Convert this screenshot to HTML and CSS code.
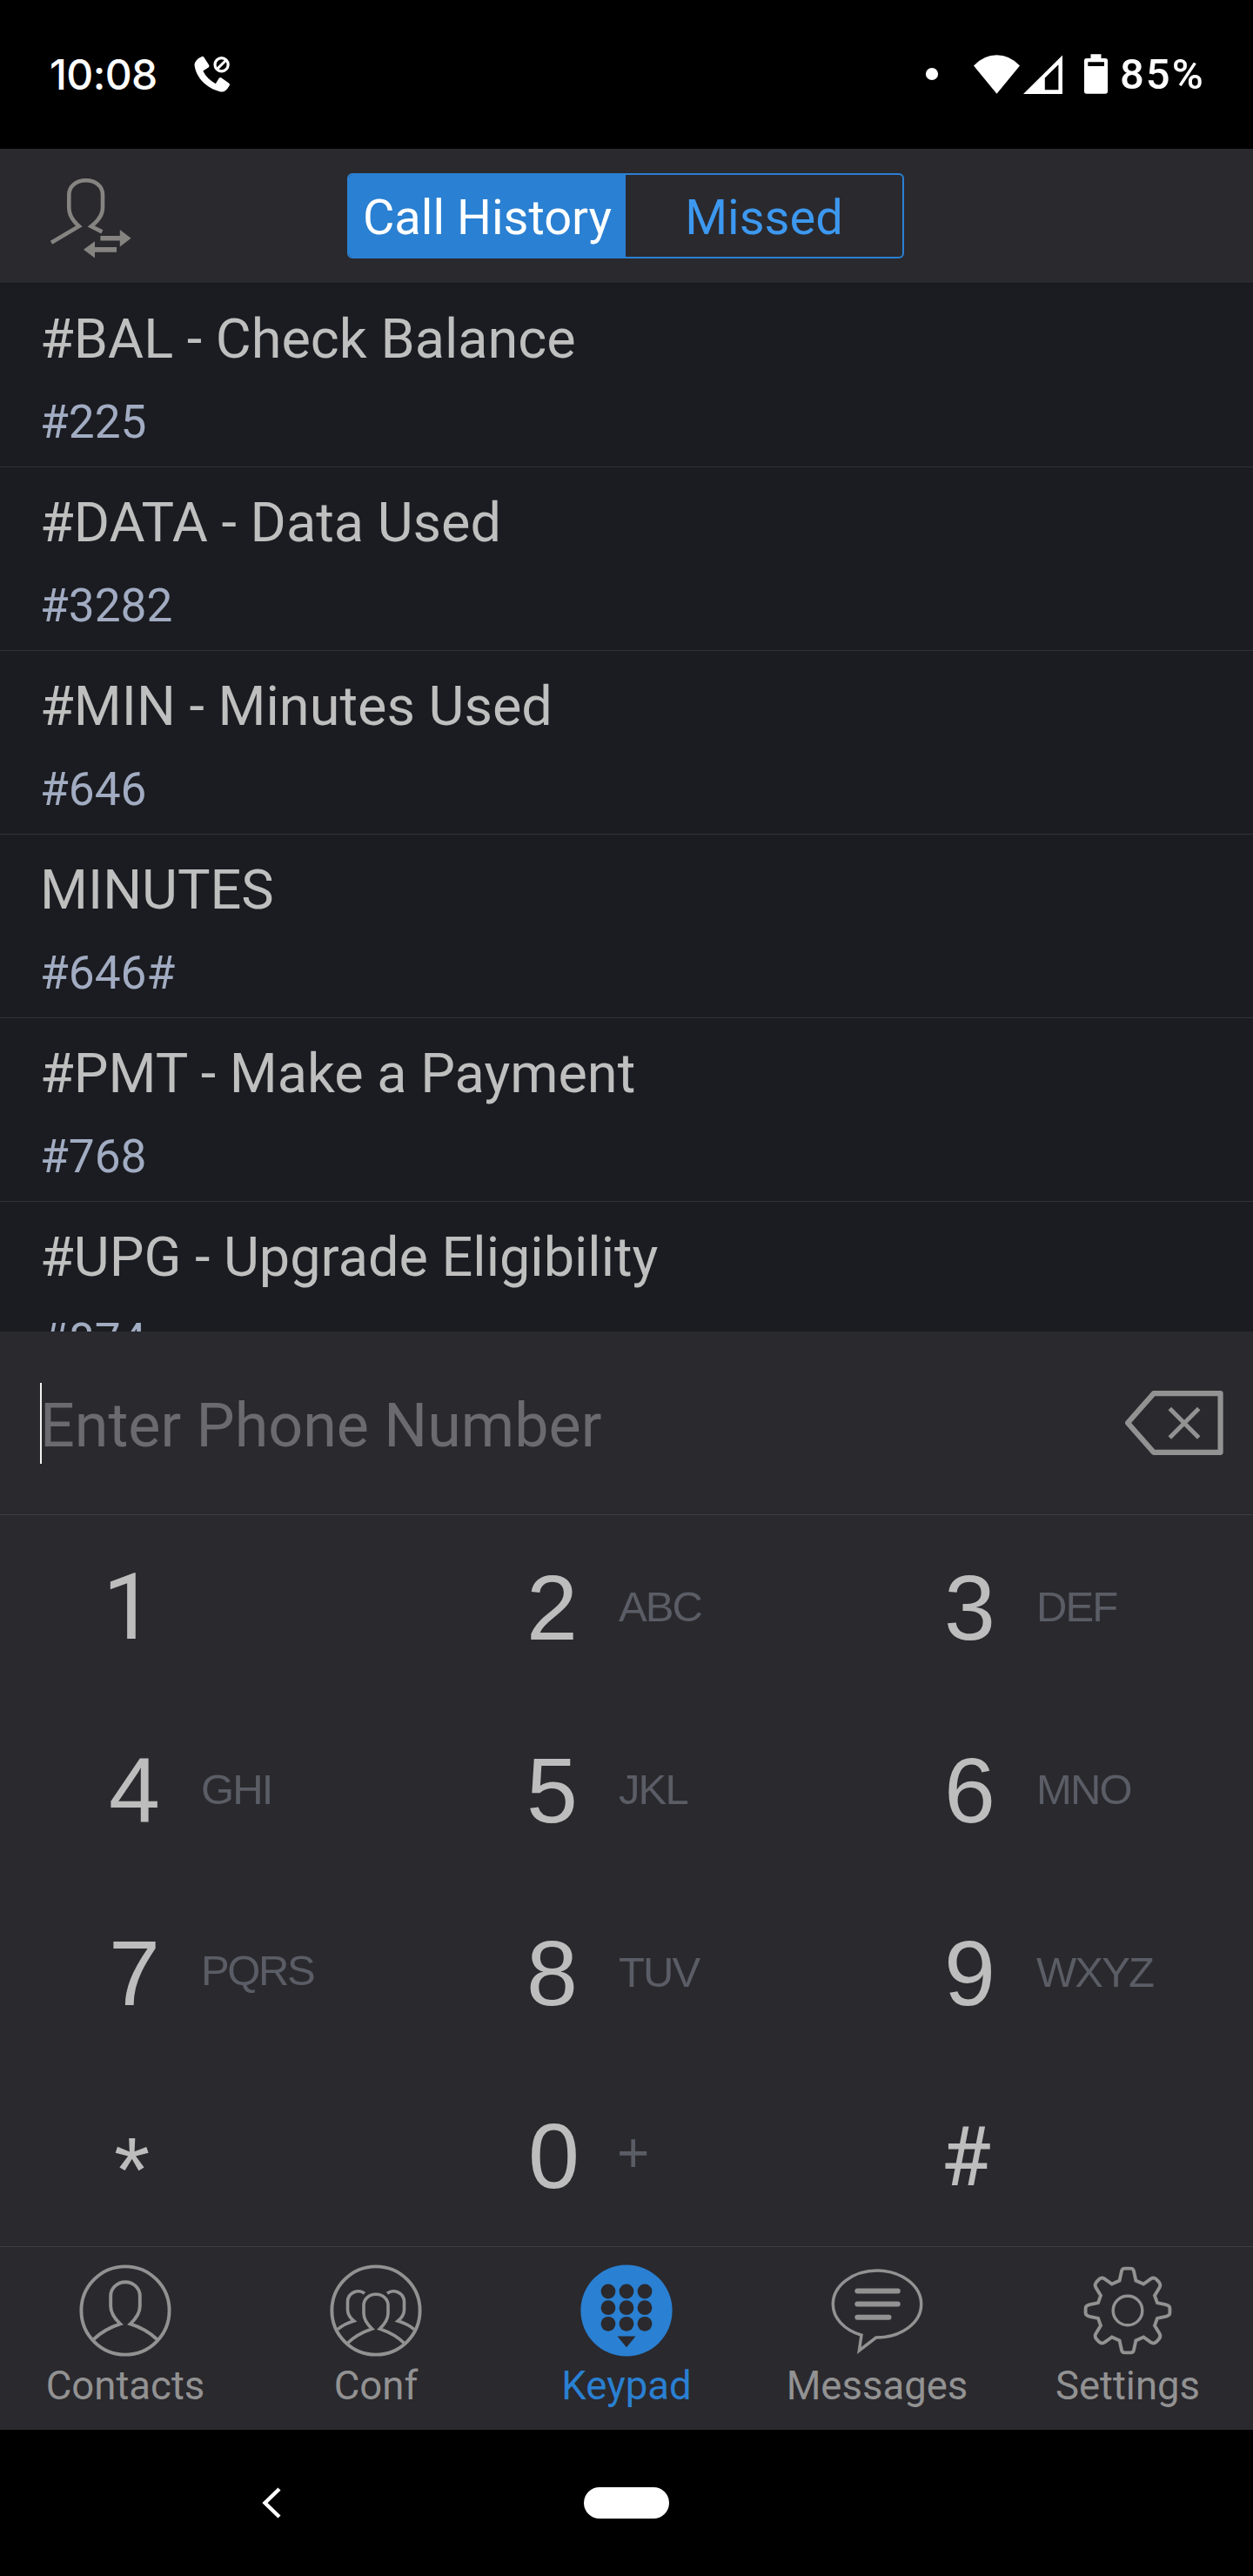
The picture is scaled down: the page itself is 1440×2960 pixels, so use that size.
FILE: index.html
```html
<!DOCTYPE html>
<html lang="en">
<head>
<meta charset="utf-8">
<title>Keypad</title>
<link rel="stylesheet" href="styles.css">
</head>
<body>
<div class="status">
  <span class="time">10:08</span>
  <svg class="call-icon" viewBox="222 62 46 46" width="46" height="46">
    <path fill="#fff" d="M231.5 65.2Q233.2 64.2 234.5 66L240 74.5Q241 76.2 239.6 77.6L233.3 81.6Q237.5 90.5 247.8 96.2L251.6 90Q252.8 88.4 254.5 89.5L263 95.4Q264.6 96.8 263.6 98.4Q259 106.5 253.5 105.4C237.5 102 225 89 223.5 74.6Q224 68.5 231.5 65.2Z"/>
    <circle cx="254.6" cy="74.3" r="7.6" fill="none" stroke="#fff" stroke-width="3.2"/>
    <path stroke="#fff" stroke-width="3" d="M249.5 79.4L259.7 69.2"/>
  </svg>
  <svg class="status-icons" viewBox="1062 60 216 50" width="216" height="50" fill="#fff">
    <circle cx="1071" cy="85" r="7.1"/>
    <path d="M1119 75.5Q1130.5 63.3 1145.5 63.3T1172 75.5L1145.5 107.8Z"/>
    <path fill-rule="evenodd" d="M1176 108L1221 63.5V108ZM1200.8 89.5V103.2H1216.4V74.3Z"/>
    <path fill-rule="evenodd" d="M1253.5 62.3H1265.5V67H1270.3Q1273 67 1273 69.7V105Q1273 107.8 1270.3 107.8H1248.7Q1246 107.8 1246 105V69.7Q1246 67 1248.7 67H1253.5ZM1250.3 71.2V76H1269V71.2Z"/>
  </svg>
  <span class="battery">85%</span>
</div>

<header class="header">
  <svg class="swap-icon" viewBox="56 200 96 100" width="96" height="100">
    <path fill="none" stroke="#868481" stroke-width="4.6" d="M59 278.7L90.8 260C84 254 79.3 247 79.3 239V224C79.3 213.5 88 207.3 98.7 207.3S118 213.5 118 224V239C118 247 112.5 254 104.8 260L117.4 266.4"/>
    <path fill="#868481" d="M115.4 271H137.8V264L150.6 273.7L137.8 283.4V276.6H115.4ZM134 284H109V277.2L96 286.8L109 296.4V289.7H134Z"/>
  </svg>
  <div class="segments">
    <span class="segment active">Call History</span>
    <span class="segment">Missed</span>
  </div>
</header>

<main class="list">
  <div class="row"><div class="name">#BAL - Check Balance</div><div class="number">#225</div></div>
  <div class="row"><div class="name">#DATA - Data Used</div><div class="number">#3282</div></div>
  <div class="row"><div class="name">#MIN - Minutes Used</div><div class="number">#646</div></div>
  <div class="row"><div class="name">MINUTES</div><div class="number">#646#</div></div>
  <div class="row"><div class="name">#PMT - Make a Payment</div><div class="number">#768</div></div>
  <div class="row"><div class="name">#UPG - Upgrade Eligibility</div><div class="number">#874</div></div>
</main>

<div class="entry">
  <span class="caret"></span>
  <span class="placeholder">Enter Phone Number</span>
  <svg class="backspace" viewBox="1290 1596 118 78" width="118" height="78" fill="none" stroke="#929292">
    <path stroke-width="6.2" stroke-linejoin="round" d="M1325.8 1601.2H1402.6V1668.8H1325.8L1296 1635Z"/>
    <path stroke-width="5" d="M1344.3 1618.5L1377.7 1652M1377.7 1618.5L1344.3 1652"/>
  </svg>
</div>

<div class="keypad">
  <div class="key"><span class="digit one">1</span></div>
  <div class="key"><span class="digit">2</span><span class="letters">ABC</span></div>
  <div class="key"><span class="digit">3</span><span class="letters">DEF</span></div>
  <div class="key"><span class="digit">4</span><span class="letters">GHI</span></div>
  <div class="key"><span class="digit">5</span><span class="letters">JKL</span></div>
  <div class="key"><span class="digit">6</span><span class="letters">MNO</span></div>
  <div class="key"><span class="digit">7</span><span class="letters raised">PQRS</span></div>
  <div class="key"><span class="digit">8</span><span class="letters">TUV</span></div>
  <div class="key"><span class="digit">9</span><span class="letters">WXYZ</span></div>
  <div class="key"><span class="digit star">*</span></div>
  <div class="key"><span class="digit zero">0</span><span class="letters plus">+</span></div>
  <div class="key"><span class="digit hash">#</span></div>
</div>

<nav class="tabs">
  <div class="tab">
    <svg viewBox="-54 -54 108 108">
      <circle r="50.6"/>
      <path d="M-36.3 33Q-24 21 -5.8 15.3Q-16.8 5 -16.8 -5V-17A16.8 15.8 0 0 1 16.8 -17V-5Q16.8 5 5.8 15.3Q24 21 36.3 33"/>
    </svg>
    <span>Contacts</span>
  </div>
  <div class="tab">
    <svg viewBox="-54 -54 108 108">
      <circle r="50.6"/>
      <path stroke-width="3.6" d="M-32.3 37.3Q-22 27 -4.4 21Q-14 12 -14 3V-6A14 12.8 0 0 1 14 -6V3Q14 12 4.4 21Q22 27 32.3 37.3M-13 -19.8C-20 -25 -32.5 -21 -32.5 -10V-1Q-32.5 6 -25.3 12Q-36 15 -44 21.6M13 -19.8C20 -25 32.5 -21 32.5 -10V-1Q32.5 6 25.3 12Q36 15 44 21.6"/>
    </svg>
    <span>Conf</span>
  </div>
  <div class="tab current">
    <svg viewBox="-54 -54 108 108">
      <circle r="52.6" fill="#2a80d2" stroke="none"/>
      <g fill="#2a292e" stroke="none">
        <circle cx="-21" cy="-22" r="8.4"/><circle cy="-22" r="8.4"/><circle cx="21" cy="-22" r="8.4"/>
        <circle cx="-21" cy="-3.3" r="8.4"/><circle cy="-3.3" r="8.4"/><circle cx="21" cy="-3.3" r="8.4"/>
        <circle cx="-21" cy="15.3" r="8.4"/><circle cy="15.3" r="8.4"/><circle cx="21" cy="15.3" r="8.4"/>
        <path d="M-10.5 29.6H10.5L0 42.3Z"/>
      </g>
    </svg>
    <span>Keypad</span>
  </div>
  <div class="tab">
    <svg viewBox="-54 -54 108 108">
      <path stroke-width="3.5" d="M-18 28.2C-37.5 22.5 -50.7 8.8 -50.7 -7.3C-50.7 -28.5 -28 -46 0 -46S50.7 -28.5 50.7 -7.3S28 31 -1.2 31L-20.6 46Z"/>
      <path stroke-width="6" stroke-linecap="round" d="M-22.7 -22.5H23.8M-22.7 -7.4H23.8M-22.7 7.8H13.5"/>
    </svg>
    <span>Messages</span>
  </div>
  <div class="tab">
    <svg viewBox="-54 -54 108 108">
      <defs><path id="quarter" d="M0 -48.4H3.5Q6.2 -48.4 7 -45.5L9.4 -34.4L18.2 -30.4L26.4 -36.4Q29.8 -38.6 32.8 -36L36 -32.6Q38.4 -29.6 36.6 -26.4L31 -17.2L34 -8.9L43.6 -6.9Q48.4 -5.8 48.4 -2.5V0"/></defs>
      <circle r="16.8" stroke-width="3.5"/>
      <use href="#quarter"/><use href="#quarter" transform="scale(-1 1)"/><use href="#quarter" transform="scale(1 -1)"/><use href="#quarter" transform="scale(-1 -1)"/>
    </svg>
    <span>Settings</span>
  </div>
</nav>

<div class="system-nav">
  <svg class="back" viewBox="0 0 26 40" width="26" height="40"><path fill="none" stroke="#fff" stroke-width="4.4" d="M22 4L5.5 20L22 36"/></svg>
  <span class="pill"></span>
</div>
</body>
</html>
```

FILE: styles.css
```css
* { box-sizing: border-box; }
body { margin: 0; width: 1440px; background: #000; font-family: Roboto, "Liberation Sans", sans-serif; overflow: hidden; }
svg { display: block; flex: none; }

.status { height: 171px; display: flex; align-items: flex-start; color: #fff; }
.time { width: 165px; margin-left: 57px; padding-top: 57px; font: 500 48px/58px Inter, sans-serif; letter-spacing: -0.6px; }
.call-icon { margin-top: 62px; }
.status-icons { margin: 60px 0 0 794px; }
.battery { margin-left: 9px; padding-top: 57px; font-size: 49px; font-weight: 500; line-height: 58px; letter-spacing: 2px; }

.header { height: 155px; padding-top: 28px; display: flex; align-items: flex-start; background: #2a292e; border-bottom: 1px solid #17181c; }
.swap-icon { margin: 1px 0 0 56px; }
.segments { margin-left: 247px; width: 640px; height: 98px; display: flex; border: 2px solid #2a80d2; border-radius: 6px; overflow: hidden; }
.segment { flex: 1; text-align: center; font-size: 56px; line-height: 98px; color: #3d98ef; white-space: nowrap; }
.segment.active { background: #2a80d2; color: #fff; }

.list { height: 1204px; overflow: hidden; background: #1b1c21; }
.row { height: 211px; padding: 26px 0 0 46px; border-bottom: 1px solid #313237; }
.name { font-size: 63px; line-height: 75px; color: #bfbfbf; }
.number { margin-top: 27px; font-size: 53.2px; line-height: 62px; color: #a1acc2; }

.entry { height: 211px; padding-left: 46px; display: flex; align-items: center; background: #2a292e; border-bottom: 1px solid #3d3d3b; }
.caret { width: 2px; height: 93px; margin-right: -2px; background: #f2f2f2; }
.placeholder { flex: 1; padding-top: 6px; font-size: 70px; color: #6b6a6e; }
.backspace { margin-right: 32px; }

.keypad { height: 840px; display: grid; grid-template-columns: repeat(3, 480px); grid-template-rows: repeat(4, 210px); background: #2a292e; font-family: "Liberation Sans", Arial, sans-serif; }
.key { height: 210px; padding-left: 125px; display: flex; }
.digit { width: 106px; font-size: 106px; line-height: 212px; color: #bdbdbd; }
.one { margin-left: -7px; font-family: Roboto, sans-serif; }
.star { padding-left: 6px; line-height: 244px; }
.zero { padding-left: 2px; }
.hash { margin-left: -4px; font-family: Roboto, sans-serif; font-size: 94px; line-height: 216px; }
.letters { font-size: 49px; line-height: 211px; letter-spacing: -1.9px; color: #5a5d65; }
.raised { line-height: 207px; letter-spacing: -2.4px; }
.plus { margin-left: -2px; font-size: 64px; line-height: 206px; }

.tabs { height: 211px; padding-top: 19px; display: flex; background: #2a292e; border-top: 1px solid #3e3d42; }
.tab { width: 288px; display: flex; flex-direction: column; align-items: center; font-size: 45.5px; line-height: 54px; color: #929292; }
.tab svg { width: 108px; height: 108px; margin-bottom: 6px; fill: none; stroke: #929292; stroke-width: 3.9; }
.current { color: #2a80d2; }

.system-nav { height: 168px; display: flex; align-items: center; }
.back { margin-left: 299px; }
.pill { width: 98px; height: 36px; margin-left: 346px; border-radius: 18px; background: #fff; }
```
